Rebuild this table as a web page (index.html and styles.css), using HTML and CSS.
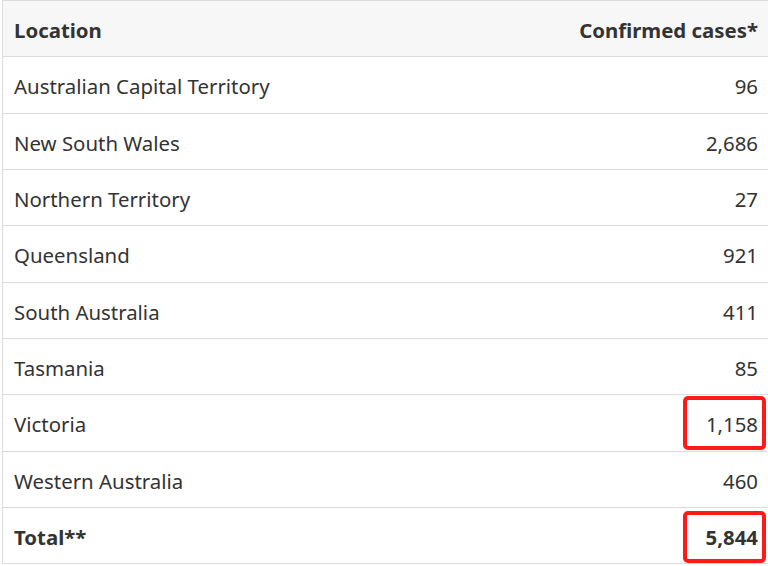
FILE: index.html
```html
<!DOCTYPE html>
<html>
<head>
<meta charset="utf-8">
<link rel="stylesheet" href="styles.css">
</head>
<body>
<table class="cases">
  <thead>
    <tr><th class="loc">Location</th><th class="num">Confirmed cases*</th></tr>
  </thead>
  <tbody>
    <tr><td>Australian Capital Territory</td><td class="num">96</td></tr>
    <tr><td>New South Wales</td><td class="num">2,686</td></tr>
    <tr><td>Northern Territory</td><td class="num">27</td></tr>
    <tr><td>Queensland</td><td class="num">921</td></tr>
    <tr><td>South Australia</td><td class="num">411</td></tr>
    <tr><td>Tasmania</td><td class="num">85</td></tr>
    <tr><td>Victoria</td><td class="num marked">1,158</td></tr>
    <tr><td>Western Australia</td><td class="num">460</td></tr>
    <tr class="total"><td>Total**</td><td class="num marked">5,844</td></tr>
  </tbody>
</table>
</body>
</html>
```
FILE: styles.css
```css
html, body {
  margin: 0;
  padding: 0;
  background: #ffffff;
}
.cases {
  margin-left: 2px;
  width: 768px;
  border-collapse: collapse;
  font-family: "Noto Sans", "Open Sans", sans-serif;
  font-size: 20.4px;
  color: #333333;
}
.cases th, .cases td {
  height: 52.33px;
  padding: 3px 11px 0 11px;
  border-top: 1px solid #dcdcdc;
  border-left: 1px solid #dcdcdc;
  text-align: left;
  vertical-align: middle;
}
.cases td.num, .cases th.num {
  border-left: none;
  text-align: right;
  padding-right: 12px;
}
.cases thead th {
  background: #f7f7f7;
  font-weight: 700;
}
.cases tr.total td {
  font-weight: 700;
  border-bottom: 1px solid #dcdcdc;
}
.cases td.marked {
  position: relative;
}
.cases td.marked::after {
  content: "";
  position: absolute;
  right: 4px;
  top: 1px;
  bottom: 1px;
  width: 75px;
  border: 4px solid #ff1a1a;
  border-radius: 5px;
}
.cases tr.total td.marked::after {
  top: 3px;
  bottom: 0;
}
```
